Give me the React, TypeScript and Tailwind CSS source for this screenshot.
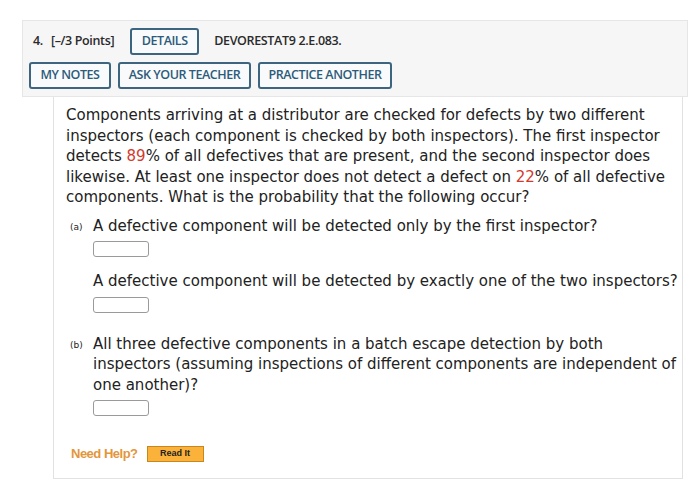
import React from 'react';

const body = { fontFamily: '"DejaVu Sans", Verdana, sans-serif' };
const head = { fontFamily: '"Open Sans", sans-serif' };

function HeadButton({ label, width }: { label: string; width: string }) {
  return (
    <button
      className={`${width} h-[27px] shrink-0 rounded-[3px] border-2 border-[#3d6580] bg-[#f8fafb] text-[#2d5b7a] text-[12.5px] font-semibold tracking-[-0.45px] whitespace-nowrap`}
    >
      {label}
    </button>
  );
}

function AnswerBox() {
  return <div className="w-[56px] h-[16px] rounded-[3px] border border-[#9a9a9a] bg-white" />;
}

export default function App() {
  return (
    <div className="w-[700px] h-[502px] bg-white pt-[20px] pl-[22px]">
      {/* header */}
      <div className="w-[666px] h-[77px] bg-[#f6f6f6] border border-[#e6e6e6] pt-[7px]" style={head}>
        <div className="flex items-center pl-[10px] h-[27px] text-[12.5px] font-semibold text-[#2a2a2a] tracking-[-0.35px]">
          <span>4.</span>
          <span className="ml-[8px]">[–/3 Points]</span>
          <div className="ml-[16px]">
            <HeadButton label="DETAILS" width="w-[69px]" />
          </div>
          <span className="ml-[15px]">DEVORESTAT9 2.E.083.</span>
        </div>
        <div className="flex items-center gap-[7px] pl-[6px] mt-[7px]">
          <HeadButton label="MY NOTES" width="w-[82px]" />
          <HeadButton label="ASK YOUR TEACHER" width="w-[133px]" />
          <HeadButton label="PRACTICE ANOTHER" width="w-[134px]" />
        </div>
      </div>

      {/* question body */}
      <div
        className="ml-[31px] w-[630px] h-[382px] border-l border-r border-b border-[#e2e2e2] pl-[12px] pt-[8px] text-[#222] whitespace-nowrap"
        style={body}
      >
        <p className="text-[15px] leading-[20.5px]">
          Components arriving at a distributor are checked for defects by two different
          <br />
          inspectors (each component is checked by both inspectors). The first inspector
          <br />
          detects <span className="text-[#d33a2c]">89</span>% of all defectives that are present, and the second inspector does
          <br />
          likewise. At least one inspector does not detect a defect on <span className="text-[#d33a2c]">22</span>% of all defective
          <br />
          components. What is the probability that the following occur?
        </p>

        <div className="flex mt-[8px]">
          <span className="shrink-0 w-[27px] pl-[4px] pt-[5px] text-[9px] leading-[12px]">(a)</span>
          <div className="flex-1">
            <p className="text-[15px] leading-[20.5px]">A defective component will be detected only by the first inspector?</p>
            <div className="mt-[5px]">
              <AnswerBox />
            </div>
            <p className="text-[15px] leading-[20.5px] mt-[14px]">
              A defective component will be detected by exactly one of the two inspectors?
            </p>
            <div className="mt-[5px]">
              <AnswerBox />
            </div>
          </div>
        </div>

        <div className="flex mt-[21px]">
          <span className="shrink-0 w-[27px] pl-[4px] pt-[5px] text-[9px] leading-[12px]">(b)</span>
          <div className="flex-1">
            <p className="text-[15px] leading-[20.5px]">
              All three defective components in a batch escape detection by both
              <br />
              inspectors (assuming inspections of different components are independent of
              <br />
              one another)?
            </p>
            <div className="mt-[5px]">
              <AnswerBox />
            </div>
          </div>
        </div>

        <div className="flex items-center mt-[28px] pl-[5px]" style={{ fontFamily: '"Liberation Sans", Arial, sans-serif' }}>
          <span className="text-[13px] font-bold text-[#e3963a] tracking-[-0.5px]">Need Help?</span>
          <button className="ml-[9px] w-[57px] h-[16px] border border-[#c9861c] bg-[#fbb23a] text-[9px] font-bold text-[#222] leading-none">
            Read It
          </button>
        </div>
      </div>
    </div>
  );
}
